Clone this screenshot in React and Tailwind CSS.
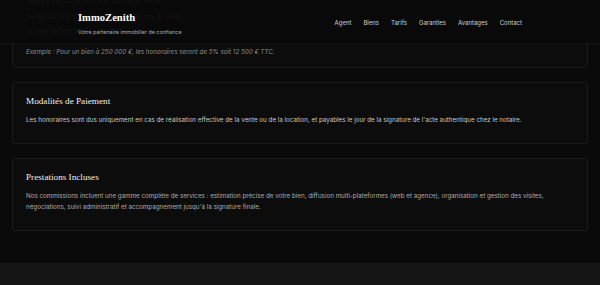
export default function App() {
  const navItems = ["Agent", "Biens", "Tarifs", "Garanties", "Avantages", "Contact"];

  const cardClass =
    "rounded-[3px] border border-[#1c1c1c] bg-[#0c0c0c] px-[13px] pt-[12px]";
  const headingClass =
    "text-[9.2px] leading-[12px] text-[#f0f0f0] [font-family:'Liberation_Serif',serif]";

  return (
    <div className="relative min-h-screen overflow-hidden bg-[#0a0a0a] [font-family:Inter,'Liberation_Sans',sans-serif]">
      {/* fixed header over the scrolled content */}
      <header className="absolute inset-x-0 top-0 z-10 h-[44px] border-b border-[#141414] bg-[#0a0a0a]/95">
        <div className="mx-auto flex h-full w-[444px] items-start justify-between pt-[11px]">
          <div className="flex flex-col">
            <span className="text-[10.6px] leading-[14px] font-semibold text-white [font-family:'Liberation_Serif',serif]">
              ImmoZenith
            </span>
            <span className="mt-[4px] text-[5.4px] leading-[7px] text-[#a8a8a8]">
              Votre partenaire immobilier de confiance
            </span>
          </div>
          <nav className="mt-[8px] flex gap-[12px] text-[6px] leading-[8px] text-[#cfcfcf]">
            {navItems.map((item) => (
              <a key={item} href="#">
                {item}
              </a>
            ))}
          </nav>
        </div>
      </header>

      <main className="-mt-[37px] flex flex-col gap-[14px] px-[12px]">
        <section className={cardClass + " pb-[9px]"}>
          <h2 className={headingClass + " mb-[8px]"}>Barème des Honoraires</h2>
          <ul className="flex flex-col gap-[4.5px] text-[6.25px] leading-[11px] text-[#c4c4c4]">
            <li>Jusqu'à 100 000 € : 6% TTC du prix de vente</li>
            <li>De 100 001 € à 300 000 € : 5% TTC du prix de vente</li>
            <li>Au-delà de 300 000 € : 4% TTC du prix de vente</li>
          </ul>
          <p className="mt-[9px] text-[6.25px] leading-[11px] italic text-[#8c8c8c]">
            Exemple : Pour un bien à 250 000 €, les honoraires seront de 5% soit 12 500 € TTC.
          </p>
        </section>

        <section className={cardClass + " pb-[17px]"}>
          <h2 className={headingClass + " mb-[8px]"}>Modalités de Paiement</h2>
          <p className="text-[6.25px] leading-[11px] text-[#c8c8c8]">
            Les honoraires sont dus uniquement en cas de réalisation effective de la vente ou de
            la location, et payables le jour de la signature de l'acte authentique chez le
            notaire.
          </p>
        </section>

        <section className={cardClass + " pb-[17px]"}>
          <h2 className={headingClass + " mb-[8px]"}>Prestations Incluses</h2>
          <p className="text-[6.25px] leading-[11px] text-[#acacac]">
            Nos commissions incluent une gamme complète de services : estimation précise de votre
            bien, diffusion multi-plateformes (web et agence), organisation et gestion des visites,
            négociations, suivi administratif et accompagnement jusqu'à la signature finale.
          </p>
        </section>
      </main>

      <footer className="mt-[32px] h-[24px] bg-[#151515]" />
    </div>
  );
}
